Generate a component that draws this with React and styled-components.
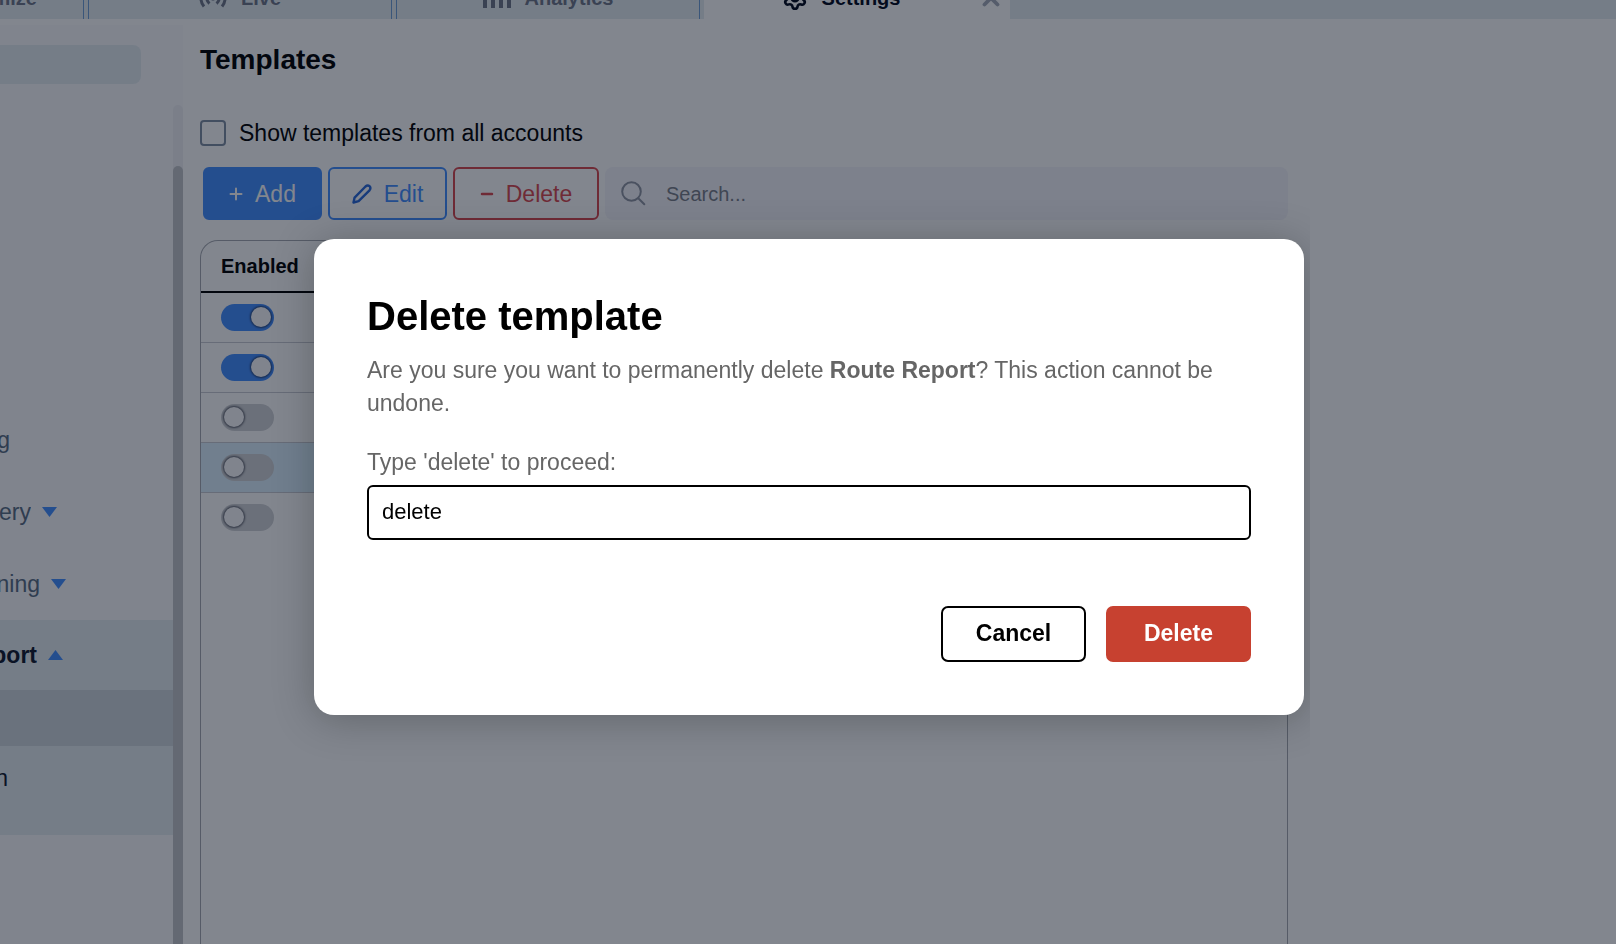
import React, { useState } from "react";
import styled, { createGlobalStyle, css } from "styled-components";
import { Settings, X } from "lucide-react";

const GlobalStyle = createGlobalStyle`
  *, *::before, *::after { box-sizing: border-box; }
  html, body { margin: 0; height: 100%; overflow: hidden; }
  body {
    font-family: "Liberation Sans", Arial, sans-serif;
    font-size: 23px;
    color: #000;
    background: #fff;
  }
  button, input { font-family: inherit; }
`;

const Page = styled.div`
  display: flex;
  flex-direction: column;
  height: 100vh;
  overflow: hidden;
`;

const TabBar = styled.nav`
  display: flex;
  align-items: flex-end;
  gap: 4px;
  flex: none;
  height: 19px;
  overflow: hidden;
  background: #e5edf1;
`;

const Tab = styled.div`
  display: flex;
  align-items: center;
  flex: 0 0 ${(p) => (p.$cut ? "84px" : "304px")};
  min-width: 0;
  height: 42px;
  justify-content: center;
  border: solid #6f9fd6;
  border-width: 0 1px 0 ${(p) => (p.$cut ? "0" : "1px")};
  color: #6f7689;
  ${(p) =>
    p.$cut &&
    css`
      justify-content: flex-start;
    `}
  ${(p) =>
    p.$active &&
    css`
      flex-basis: 306px;
      border: 0;
      background: #fff;
      color: #00081c;
    `}
`;

const TabLabel = styled.a`
  display: flex;
  flex: ${(p) => (p.$grow ? 1 : "none")};
  align-items: center;
  justify-content: center;
  gap: 14px;
  color: inherit;
  font-size: 20px;
  line-height: 24px;
  font-weight: bold;
  text-decoration: none;
`;

const CloseButton = styled.button`
  display: flex;
  padding: 0 6px 0 0;
  border: 0;
  background: none;
  color: #a4abb8;
`;

const Body = styled.div`
  display: flex;
  flex: 1;
  min-height: 0;
`;

const Sidebar = styled.aside`
  display: flex;
  flex: 0 0 183px;
  margin-top: 6px;
  background: #fafafd;
`;

const SidebarContent = styled.div`
  display: flex;
  flex-direction: column;
  flex: 1;
`;

const SidebarSearch = styled.input`
  width: 141px;
  height: 39px;
  margin: 20px 0 320px;
  border: 0;
  border-radius: 0 8px 8px 0;
  background: #e5edf1;
`;

const NavItem = styled.a`
  display: flex;
  align-items: center;
  gap: 11px;
  height: ${(p) => p.$height || 72}px;
  color: ${(p) => (p.$dark ? "#10182c" : "#596d83")};
  font-weight: ${(p) => (p.$bold ? "bold" : "normal")};
  line-height: 28px;
  text-decoration: none;
  background: ${(p) => (p.$selected ? "#cfd6dc" : "transparent")};
`;

const NavText = styled.span`
  display: flex;
  justify-content: flex-end;
  width: ${(p) => p.$width}px;
  overflow: hidden;
`;

const NavGroup = styled.div`
  padding-bottom: 25px;
  background: #e5edf1;
`;

const ScrollTrack = styled.div`
  flex: 0 0 10px;
  margin-top: 80px;
  padding-top: 61px;
  border-radius: 5px 5px 0 0;
  background: #f0f1f4;
`;

const ScrollThumb = styled.div`
  height: 100%;
  border-radius: 5px 5px 0 0;
  background: #c3c5c9;
`;

const Main = styled.main`
  display: flex;
  flex-direction: column;
  flex: 1;
  min-width: 0;
  max-width: 1105px;
  padding: 24px 0 0 17px;
`;

const Heading = styled.h1`
  margin: 0;
  font-size: 28px;
  line-height: 34px;
`;

const CheckRow = styled.label`
  display: flex;
  align-items: center;
  gap: 13px;
  margin: 40px 0 18px;
  line-height: 32px;
`;

const CheckBox = styled.input`
  appearance: none;
  width: 26px;
  height: 26px;
  margin: 0;
  border: 2px solid #7f8ea3;
  border-radius: 4px;
`;

const Toolbar = styled.div`
  display: flex;
  gap: 6px;
  padding-left: 3px;
  margin-bottom: 20px;
`;

const ToolButton = styled.button`
  display: flex;
  align-items: center;
  justify-content: center;
  gap: 12px;
  flex: none;
  width: ${(p) => (p.$wide ? "146px" : "119px")};
  height: 53px;
  padding: 0;
  border: 2px solid ${(p) => p.$color};
  border-radius: 6px;
  background: ${(p) => (p.$filled ? p.$color : "transparent")};
  color: ${(p) => (p.$filled ? "#fff" : p.$color)};
  font-size: 23px;
  line-height: 28px;
`;

const SearchBox = styled.label`
  display: flex;
  align-items: center;
  gap: 20px;
  flex: 1;
  height: 53px;
  padding: 0 16px;
  border-radius: 8px;
  background: #f5f5fa;
  color: #8f95a3;
`;

const SearchInput = styled.input`
  flex: 1;
  min-width: 0;
  padding: 0;
  border: 0;
  outline: 0;
  background: none;
  font-size: 20px;
  line-height: 24px;
  &::placeholder { color: #7a7e89; opacity: 1; }
`;

const TablePanel = styled.section`
  flex: 1;
  min-height: 0;
  border: 1px solid #a6a9b0;
  border-bottom: 0;
  border-radius: 18px 18px 0 0;
  overflow: hidden;
`;

const Table = styled.table`
  width: 100%;
  border-collapse: collapse;
`;

const HeadCell = styled.th`
  height: 51px;
  padding: 0 20px;
  border-bottom: 2px solid #000;
  font-size: 20px;
  line-height: 24px;
  text-align: left;
`;

const Row = styled.tr`
  background: ${(p) => (p.$selected ? "#dcf1ff" : "transparent")};
  &:not(:last-child) { border-bottom: 1px solid #c9cbd3; }
`;

const Cell = styled.td`
  height: 50px;
  padding: 0 20px;
`;

const Toggle = styled.input`
  appearance: none;
  display: flex;
  align-items: center;
  width: 53px;
  height: 27px;
  margin: 0;
  padding: 0 3px;
  border-radius: 14px;
  background: #d0d2d6;
  &::before {
    content: "";
    width: 20px;
    height: 20px;
    border-radius: 50%;
    background: #fafafd;
    box-shadow: 0 0 2px 1px rgba(20, 25, 40, 0.6);
  }
  &:checked { justify-content: flex-end; background: #438eff; }
`;

const Overlay = styled.div`
  position: fixed;
  inset: 0;
  display: flex;
  align-items: center;
  justify-content: center;
  padding: 9px 16px 0 18px;
  background: rgba(5, 13, 29, 0.5);
`;

const Dialog = styled.form`
  display: flex;
  flex-direction: column;
  width: 100%;
  max-width: 990px;
  padding: 53px;
  border-radius: 20px;
  background: #fff;
  box-shadow: 0 4px 40px rgba(0, 0, 0, 0.26);
  clip-path: inset(-60px -6px -60px -60px);
`;

const DialogTitle = styled.h2`
  margin: 0 0 14px;
  font-size: 40px;
  line-height: 48px;
`;

const DialogText = styled.p`
  margin: 0 0 26px;
  color: #666;
  line-height: 33px;
`;

const FieldLabel = styled.label`
  margin-bottom: 6px;
  color: #666;
  line-height: 33px;
`;

const Field = styled.input`
  height: 55px;
  margin-bottom: 66px;
  padding: 0 13px;
  border: 2px solid #000;
  border-radius: 6px;
  outline: 0;
  background: #fff;
  color: #000;
  font-size: 22px;
`;

const Actions = styled.div`
  display: flex;
  justify-content: flex-end;
  gap: 20px;
`;

const ActionButton = styled.button`
  width: 145px;
  height: 56px;
  padding: 0;
  border: 2px solid ${(p) => (p.$danger ? "#c74130" : "#000")};
  border-radius: 7px;
  background: ${(p) => (p.$danger ? "#c74130" : "#fff")};
  color: ${(p) => (p.$danger ? "#fff" : "#000")};
  font-size: 23px;
  font-weight: bold;
`;

const LiveIcon = () => (
  <svg width="28" height="24" viewBox="0 0 28 24" fill="none" stroke="currentColor" strokeWidth="3">
    <path d="M6 3C.8 8.500 .8 15.500 5 20.500M22 3c5.200 5.500 5.200 12.500 1 17.500M10.500 17.500c-3.500-3-3.500-7 0-10M17.500 17.500c3.500-3 3.500-7 0-10" />
    <circle cx="14" cy="12" r="1" />
  </svg>
);

const BarsIcon = () => (
  <svg width="28" height="24" viewBox="0 0 28 24" fill="currentColor">
    <path d="M0 8h4v14H0zM8 3h4v19H8zM16 6h4v16h-4zM24 1h4v21h-4z" />
  </svg>
);

const Caret = ({ up }) => (
  <svg width="15" height="10" viewBox="0 0 15 10" fill="#438eff">
    <path d={up ? "M0 10 7.500 0 15 10z" : "M0 0h15L7.500 10z"} />
  </svg>
);

const PlusIcon = () => (
  <svg width="14" height="14" viewBox="0 0 14 14" stroke="currentColor" strokeWidth="2" strokeLinecap="round">
    <path d="M7 1.500v11M1.500 7h11" />
  </svg>
);

const MinusIcon = () => (
  <svg width="14" height="14" viewBox="0 0 14 14" stroke="currentColor" strokeWidth="2.500" strokeLinecap="round">
    <path d="M2 7h10" />
  </svg>
);

const PencilIcon = () => (
  <svg width="20" height="20" viewBox="0 0 20 20" fill="none" stroke="#2868d8" strokeWidth="2.400" strokeLinecap="round" strokeLinejoin="round">
    <path d="M1.500 18.500 2.600 13.600 13.500 2.500c2.900-2.700 6.400.6 4 3.800L6.600 17.200z" />
  </svg>
);

const SearchIcon = () => (
  <svg width="25" height="25" viewBox="0 0 25 25" fill="none" stroke="currentColor" strokeWidth="2" strokeLinecap="round">
    <circle cx="10.500" cy="10.500" r="9.300" />
    <path d="m17.300 17.300 6 6" />
  </svg>
);

const initialRows = [
  { id: 1, enabled: true },
  { id: 2, enabled: true },
  { id: 3, enabled: false },
  { id: 4, enabled: false, selected: true },
  { id: 5, enabled: false },
];

export default function App() {
  const [rows, setRows] = useState(initialRows);
  const [confirmation, setConfirmation] = useState("delete");

  const toggle = (id) =>
    setRows(rows.map((r) => (r.id === id ? { ...r, enabled: !r.enabled } : r)));

  return (
    <>
      <GlobalStyle />
      <Page>
        <TabBar>
          <Tab $cut><TabLabel href="#optimize"><NavText $width={37}>mize</NavText></TabLabel></Tab>
          <Tab><TabLabel href="#live"><LiveIcon />Live</TabLabel></Tab>
          <Tab><TabLabel href="#analytics"><BarsIcon />Analytics</TabLabel></Tab>
          <Tab $active>
            <TabLabel href="#settings" $grow><Settings size={26} strokeWidth={2.4} />Settings</TabLabel>
            <CloseButton aria-label="Close tab"><X size={26} strokeWidth={3.5} /></CloseButton>
          </Tab>
        </TabBar>
        <Body>
          <Sidebar>
            <SidebarContent>
              <SidebarSearch aria-label="Search settings" />
              <NavItem href="#a"><NavText $width={10}>g</NavText></NavItem>
              <NavItem href="#b"><NavText $width={31}>ery</NavText><Caret /></NavItem>
              <NavItem href="#c"><NavText $width={40}>ning</NavText><Caret /></NavItem>
              <NavGroup>
                <NavItem href="#d" $height={70} $bold $dark><NavText $width={37}>port</NavText><Caret up /></NavItem>
                <NavItem href="#e" $height={56} $selected aria-label="Templates" />
                <NavItem href="#f" $height={64} $dark><NavText $width={8}>n</NavText></NavItem>
              </NavGroup>
            </SidebarContent>
            <ScrollTrack><ScrollThumb /></ScrollTrack>
          </Sidebar>
          <Main>
            <Heading>Templates</Heading>
            <CheckRow><CheckBox type="checkbox" />Show templates from all accounts</CheckRow>
            <Toolbar>
              <ToolButton $color="#438eff" $filled><PlusIcon />Add</ToolButton>
              <ToolButton $color="#438eff"><PencilIcon />Edit</ToolButton>
              <ToolButton $color="#d9484f" $wide><MinusIcon />Delete</ToolButton>
              <SearchBox>
                <SearchIcon />
                <SearchInput type="search" placeholder="Search..." aria-label="Search templates" />
              </SearchBox>
            </Toolbar>
            <TablePanel>
              <Table>
                <thead><tr><HeadCell scope="col">Enabled</HeadCell></tr></thead>
                <tbody>
                  {rows.map((r) => (
                    <Row key={r.id} $selected={r.selected}>
                      <Cell>
                        <Toggle type="checkbox" role="switch" aria-label={`Enable template ${r.id}`} checked={r.enabled} onChange={() => toggle(r.id)} />
                      </Cell>
                    </Row>
                  ))}
                </tbody>
              </Table>
            </TablePanel>
          </Main>
        </Body>
      </Page>
      <Overlay>
        <Dialog role="dialog" aria-modal="true" aria-labelledby="dialog-title" onSubmit={(e) => e.preventDefault()}>
          <DialogTitle id="dialog-title">Delete template</DialogTitle>
          <DialogText>
            Are you sure you want to permanently delete <strong>Route Report</strong>? This action cannot be undone.
          </DialogText>
          <FieldLabel htmlFor="confirmation">Type 'delete' to proceed:</FieldLabel>
          <Field id="confirmation" value={confirmation} onChange={(e) => setConfirmation(e.target.value)} />
          <Actions>
            <ActionButton type="button">Cancel</ActionButton>
            <ActionButton type="submit" $danger>Delete</ActionButton>
          </Actions>
        </Dialog>
      </Overlay>
    </>
  );
}
